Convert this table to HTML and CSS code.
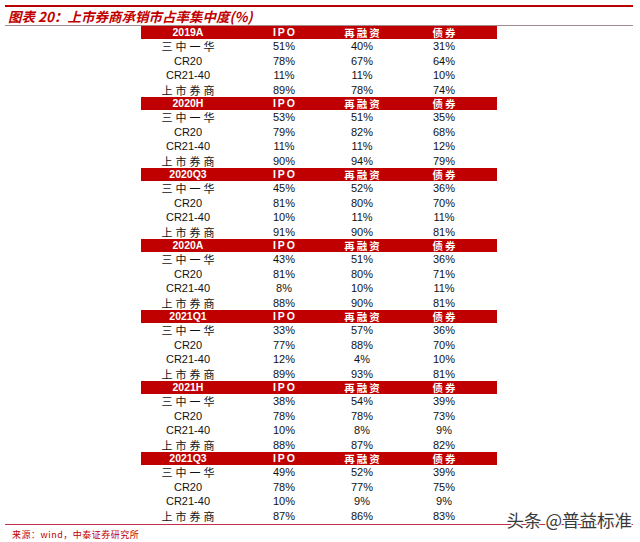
FILE: index.html
```html
<!DOCTYPE html>
<html lang="zh">
<head>
<meta charset="utf-8">
<link rel="stylesheet" href="styles.css">
</head>
<body>
<div class="page">
  <div class="rule-top"></div>
  <h1 class="title">图表 20：上市券商承销市占率集中度(%)</h1>
  <div class="rule-sub"></div>
  <div class="table" id="table"></div>
  <div class="rule-bottom"></div>
  <p class="source">来源：wind，中泰证券研究所</p>
  <div class="watermark">头条 @普益标准</div>
</div>
<script src="app.js"></script>
</body>
</html>
```
FILE: styles.css
```css
html, body { margin: 0; padding: 0; background: #fff; }
.page {
  position: relative;
  width: 640px;
  height: 542px;
  padding: 5px 7px 0 5px;
  box-sizing: border-box;
  font-family: "Liberation Sans", "Noto Sans CJK SC", sans-serif;
}
.rule-top { height: 2px; background: #b80000; }
.title {
  margin: 0;
  height: 18px;
  line-height: 18px;
  padding-left: 3px;
  font-size: 13.5px;
  font-weight: bold;
  font-style: italic;
  color: #c00000;
  font-family: "Noto Sans CJK SC", sans-serif;
}
.rule-sub { height: 1px; background: #a88a8e; }
.table { margin-left: 136px; width: 356px; }
.row {
  display: grid;
  grid-template-columns: 94px 98px 58px 106px;
  height: 14.5px;
  line-height: 14.5px;
  font-size: 11px;
  color: #111;
  text-align: center;
}
.row.head {
  height: 13px;
  line-height: 13px;
  background: #c00000;
  color: #fff;
  font-weight: bold;
  font-size: 10.5px;
}
.cjk {
  font-family: "Noto Sans CJK SC", sans-serif;
  letter-spacing: 3px;
  text-indent: 3px;
}
.row.head .cjk { letter-spacing: 2px; text-indent: 2px; }
.sp { letter-spacing: 2px; text-indent: 2px; }
.rule-bottom { height: 1px; background: #c03048; margin-top: 1px; }
.source {
  margin: 3px 0 0 7px;
  font-size: 9px;
  line-height: 14px;
  color: #c00000;
  font-family: "Noto Sans CJK SC", sans-serif;
  letter-spacing: 0.5px;
}
.watermark {
  position: absolute;
  right: 8px;
  top: 508px;
  font-size: 17.5px;
  line-height: 24px;
  color: #3a3a3a;
  font-family: "Noto Sans CJK SC", sans-serif;
  text-shadow: 1px 1px 0 #fff, -1px -1px 0 #fff, 1px -1px 0 #fff, -1px 1px 0 #fff;
}
```
FILE: app.js
```js
var data = [
  ["2019A", [[51,40,31],[78,67,64],[11,11,10],[89,78,74]]],
  ["2020H", [[53,51,35],[79,82,68],[11,11,12],[90,94,79]]],
  ["2020Q3", [[45,52,36],[81,80,70],[10,11,11],[91,90,81]]],
  ["2020A", [[43,51,36],[81,80,71],[8,10,11],[88,90,81]]],
  ["2021Q1", [[33,57,36],[77,88,70],[12,4,10],[89,93,81]]],
  ["2021H", [[38,54,39],[78,78,73],[10,8,9],[88,87,82]]],
  ["2021Q3", [[49,52,39],[78,77,75],[10,9,9],[87,86,83]]]
];
var labels = [["三中一华", true], ["CR20", false], ["CR21-40", false], ["上市券商", true]];
var t = document.getElementById("table");
var html = "";
data.forEach(function (b) {
  html += '<div class="row head"><div>' + b[0] + '</div><div class="sp">IPO</div><div class="cjk">再融资</div><div class="cjk">债券</div></div>';
  b[1].forEach(function (r, i) {
    html += '<div class="row"><div class="' + (labels[i][1] ? "cjk" : "") + '">' + labels[i][0] + '</div>';
    r.forEach(function (v) { html += '<div>' + v + '%</div>'; });
    html += '</div>';
  });
});
t.innerHTML = html;
```
